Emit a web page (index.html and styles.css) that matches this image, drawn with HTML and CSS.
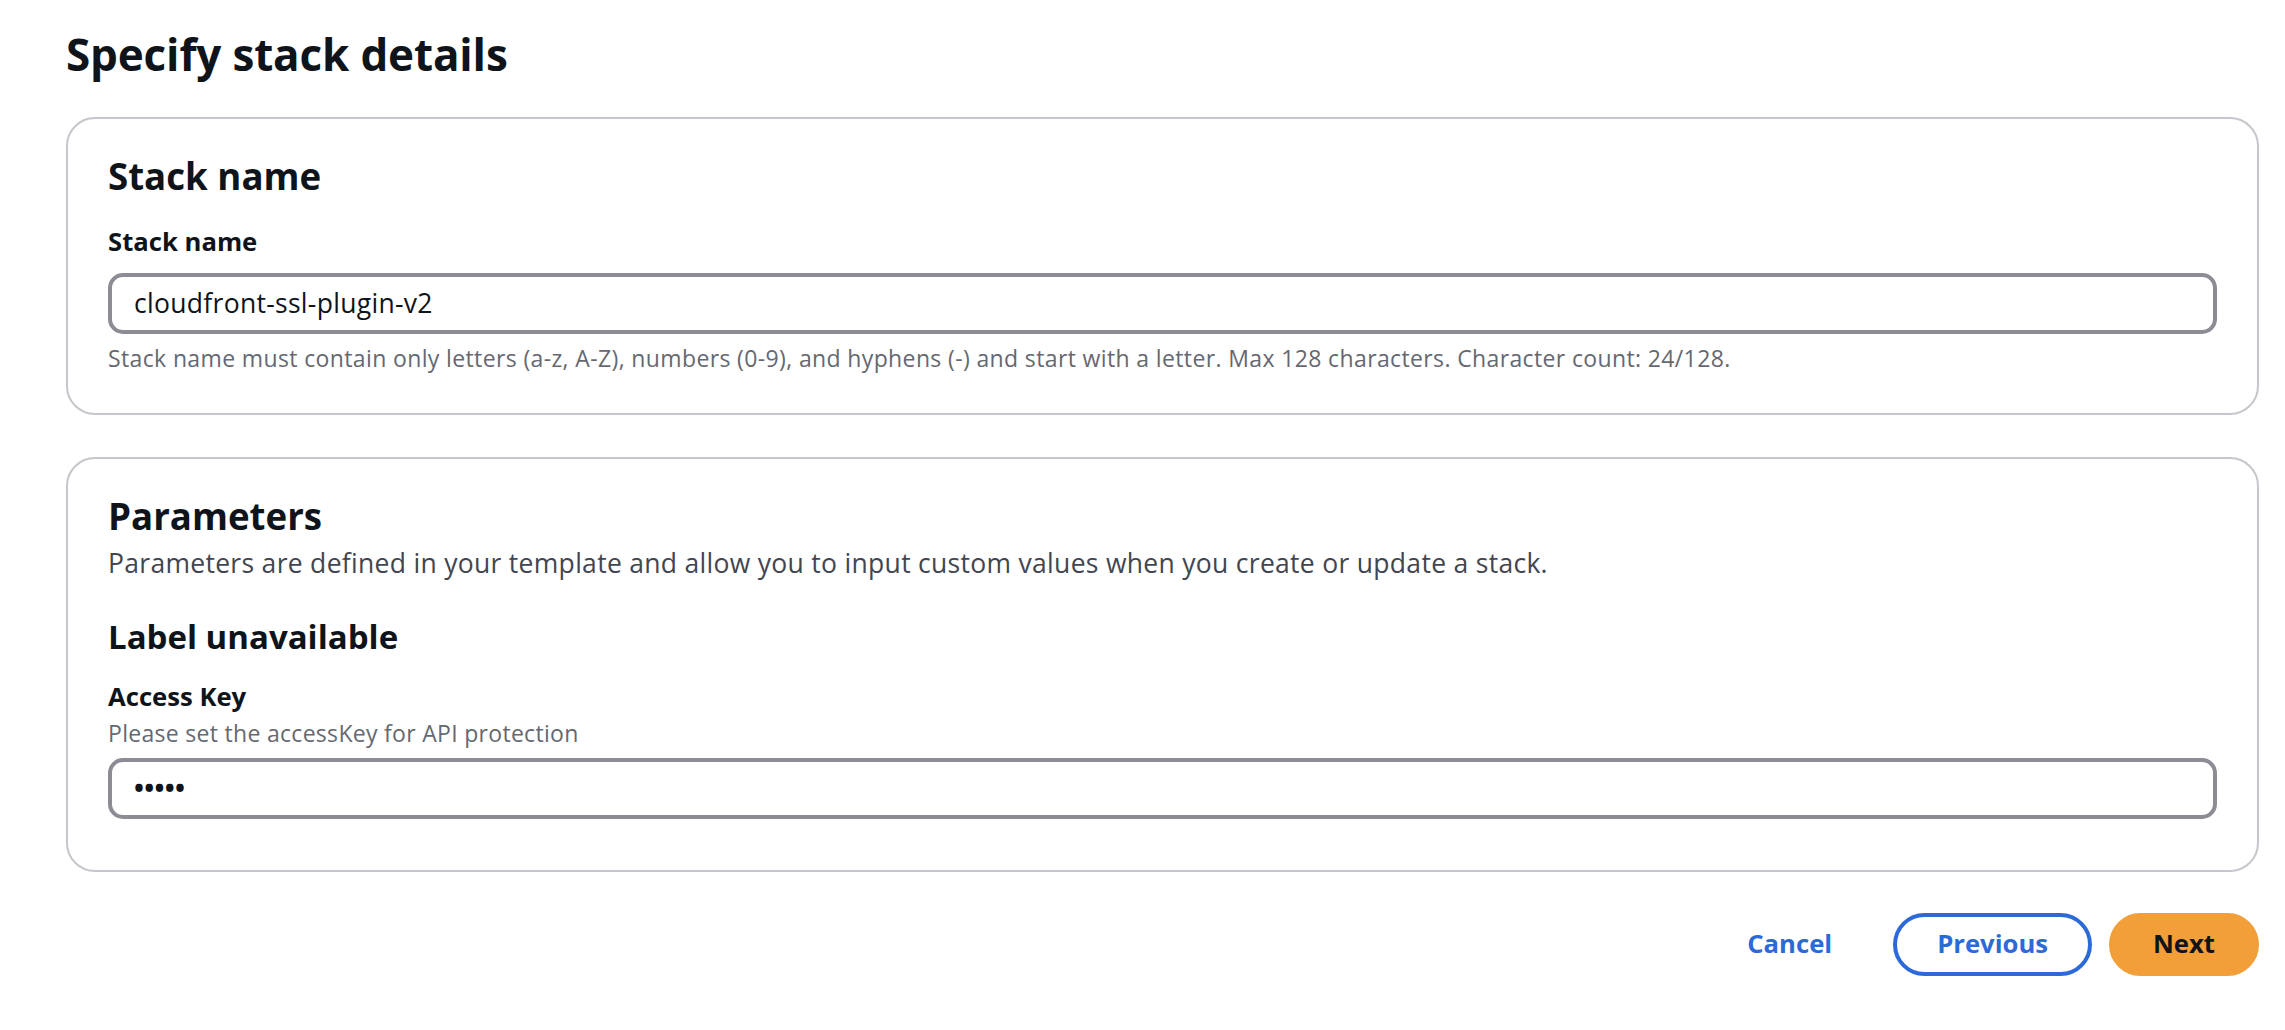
FILE: index.html
```html
<!DOCTYPE html>
<html lang="en">
<head>
<meta charset="utf-8">
<title>Specify stack details</title>
<link rel="stylesheet" href="styles.css">
</head>
<body>
<main class="page">
  <h1 class="page-title">Specify stack details</h1>

  <section class="card">
    <h2 class="card-title">Stack name</h2>
    <div class="field">
      <label class="field-label">Stack name</label>
      <div class="input">cloudfront-ssl-plugin-v2</div>
      <p class="constraint">Stack name must contain only letters (a-z, A-Z), numbers (0-9), and hyphens (-) and start with a letter. Max 128 characters. Character count: 24/128.</p>
    </div>
  </section>

  <section class="card card-params">
    <h2 class="card-title">Parameters</h2>
    <p class="card-desc">Parameters are defined in your template and allow you to input custom values when you create or update a stack.</p>
    <h3 class="group-title">Label unavailable</h3>
    <div class="field field-last">
      <label class="field-label field-label-tight">Access Key</label>
      <p class="field-desc">Please set the accessKey for API protection</p>
      <div class="input input-secret">•••••</div>
    </div>
  </section>

  <div class="actions">
    <button class="btn btn-link">Cancel</button>
    <button class="btn btn-normal">Previous</button>
    <button class="btn btn-primary">Next</button>
  </div>
</main>
</body>
</html>
```

FILE: styles.css
```css
* {
  box-sizing: border-box;
}

html, body {
  margin: 0;
  background: #ffffff;
}

body {
  font-family: "Open Sans", "Noto Sans", sans-serif;
  color: #0f141a;
}

.page {
  display: flex;
  flex-direction: column;
  padding: 27px 26px 40px 66px;
}

.page-title {
  margin: 0 0 35px 0;
  font-size: 44px;
  line-height: 55px;
  font-weight: 700;
  color: #0f141a;
  letter-spacing: -0.15px;
}

.card {
  border: 2px solid #c6c6cd;
  border-radius: 29px;
  padding: 35px 40px 40px 40px;
  background: #ffffff;
}

.card + .card {
  margin-top: 42px;
}

.card-title {
  margin: 0;
  font-size: 36.67px;
  line-height: 44px;
  font-weight: 700;
  color: #0f141a;
}

.card > .card-title + .field {
  margin-top: 26px;
}

.card-desc {
  margin: 6.5px 0 0 0;
  font-size: 26.5px;
  line-height: 36.67px;
  letter-spacing: 0.3px;
  color: #424650;
}

.group-title {
  margin: 35.5px 0 0 0;
  font-size: 33px;
  line-height: 40.3px;
  font-weight: 700;
  color: #0f141a;
}

.group-title + .field {
  margin-top: 21.5px;
}

.field {
  display: flex;
  flex-direction: column;
}

.field-last {
  padding-bottom: 11px;
}

.field-label {
  font-size: 25.67px;
  line-height: 36.67px;
  font-weight: 700;
  color: #0f141a;
  margin-bottom: 12.3px;
}

.field-label-tight {
  margin-bottom: 3.3px;
}

.field-desc {
  margin: 0 0 10px 0;
  font-size: 23px;
  line-height: 29.33px;
  letter-spacing: 0.3px;
  color: #656871;
}

.input {
  height: 61px;
  border: 4px solid #8c8c94;
  border-radius: 15px;
  padding: 0 22px;
  display: flex;
  align-items: center;
  font-size: 26.5px;
  line-height: 36.67px;
  letter-spacing: 0.3px;
  color: #0f141a;
  background: #ffffff;
}

.input-secret {
  font-weight: 700;
}

.constraint {
  margin: 10px 0 0 0;
  font-size: 23px;
  line-height: 29.33px;
  letter-spacing: 0.37px;
  color: #656871;
}

.actions {
  margin-top: 41px;
  display: flex;
  justify-content: flex-end;
  align-items: center;
  gap: 17px;
}

.btn {
  height: 63px;
  border: 4px solid transparent;
  border-radius: 40px;
  padding: 0 40px;
  font-family: "Open Sans", "Noto Sans", sans-serif;
  font-size: 25.67px;
  line-height: 36.67px;
  font-weight: 700;
  background: transparent;
  cursor: pointer;
}

.btn-link {
  color: #2c6ad8;
}

.btn-normal {
  color: #2c6ad8;
  border-color: #2c6ad8;
  background: #ffffff;
}

.btn-primary {
  color: #0f141a;
  background: #f29f3a;
  border-color: #f29f3a;
}
```
